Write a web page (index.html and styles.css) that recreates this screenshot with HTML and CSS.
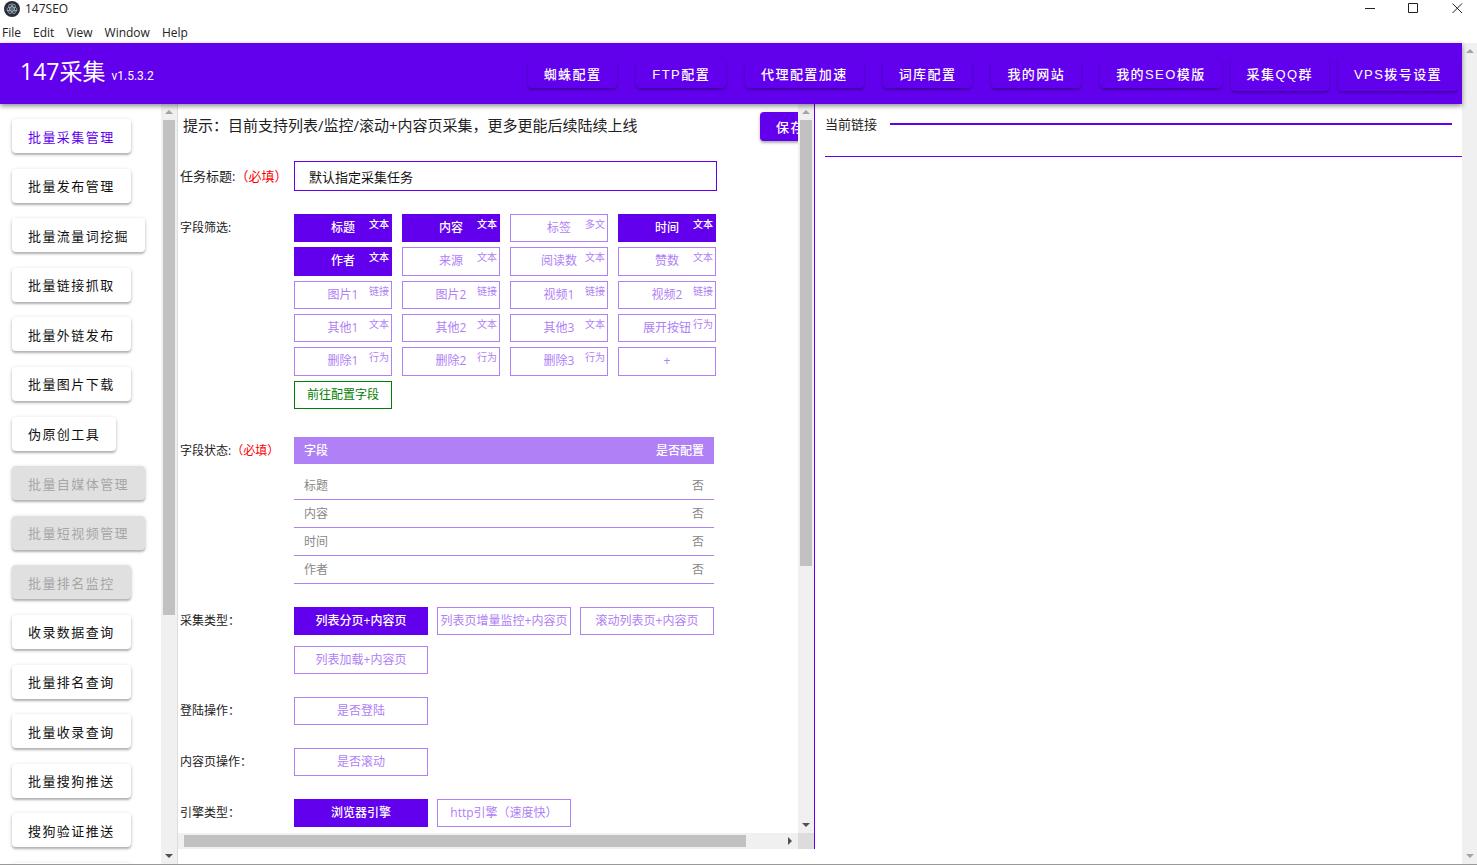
FILE: index.html
```html
<!DOCTYPE html>
<html lang="zh-CN">
<head>
<meta charset="utf-8">
<title>147SEO</title>
<link rel="stylesheet" href="styles.css">
</head>
<body>
<div class="window">
  <div class="titlebar">
    <svg class="app-icon" viewBox="0 0 16 16" aria-hidden="true">
      <circle cx="8" cy="8" r="8" fill="#2b2e3a"/>
      <g fill="none" stroke="#a9c3cc" stroke-width="0.7">
        <ellipse cx="8" cy="8" rx="5.2" ry="2"/>
        <ellipse cx="8" cy="8" rx="5.2" ry="2" transform="rotate(60 8 8)"/>
        <ellipse cx="8" cy="8" rx="5.2" ry="2" transform="rotate(120 8 8)"/>
      </g>
      <circle cx="8" cy="8" r="0.8" fill="#a9c3cc"/>
      <circle cx="3.4" cy="9.8" r="0.7" fill="#a9c3cc"/>
      <circle cx="12.6" cy="9.8" r="0.7" fill="#a9c3cc"/>
      <circle cx="8" cy="2.9" r="0.7" fill="#a9c3cc"/>
    </svg>
    <span class="app-name">147SEO</span>
    <div class="window-controls">
      <button type="button" aria-label="最小化"><svg viewBox="0 0 11 11"><path d="M0 5.5H10"/></svg></button>
      <button type="button" aria-label="最大化"><svg viewBox="0 0 11 11"><path d="M.5 .5H9.500V9.500H.5Z"/></svg></button>
      <button type="button" aria-label="关闭"><svg viewBox="0 0 11 11"><path d="M.5 .5L10 10M10 .5L.5 10"/></svg></button>
    </div>
  </div>
  <nav class="menubar" aria-label="菜单">
    <button type="button">File</button>
    <button type="button">Edit</button>
    <button type="button">View</button>
    <button type="button">Window</button>
    <button type="button">Help</button>
  </nav>

  <div class="viewport">
    <div class="page">
      <header class="appbar">
        <h1 class="brand">147采集 <small>v1.5.3.2</small></h1>
        <nav class="topnav">
          <button type="button" class="btn btn-top">蜘蛛配置</button>
          <button type="button" class="btn btn-top">FTP配置</button>
          <button type="button" class="btn btn-top">代理配置加速</button>
          <button type="button" class="btn btn-top">词库配置</button>
          <button type="button" class="btn btn-top">我的网站</button>
          <button type="button" class="btn btn-top">我的SEO模版</button>
          <div class="topnav-extra">
            <button type="button" class="btn btn-top btn-tall">采集QQ群</button>
            <button type="button" class="btn btn-top btn-tall">VPS拨号设置</button>
          </div>
        </nav>
      </header>

      <div class="body">
        <aside class="sidebar">
          <div class="sidebar-clip">
            <nav class="sidenav">
              <button type="button" class="btn btn-side current">批量采集管理</button>
              <button type="button" class="btn btn-side">批量发布管理</button>
              <button type="button" class="btn btn-side">批量流量词挖掘</button>
              <button type="button" class="btn btn-side">批量链接抓取</button>
              <button type="button" class="btn btn-side">批量外链发布</button>
              <button type="button" class="btn btn-side">批量图片下载</button>
              <button type="button" class="btn btn-side">伪原创工具</button>
              <button type="button" class="btn btn-side" disabled>批量自媒体管理</button>
              <button type="button" class="btn btn-side" disabled>批量短视频管理</button>
              <button type="button" class="btn btn-side" disabled>批量排名监控</button>
              <button type="button" class="btn btn-side">收录数据查询</button>
              <button type="button" class="btn btn-side">批量排名查询</button>
              <button type="button" class="btn btn-side">批量收录查询</button>
              <button type="button" class="btn btn-side">批量搜狗推送</button>
              <button type="button" class="btn btn-side">搜狗验证推送</button>
              <button type="button" class="btn btn-side btn-blank" aria-label="更多"></button>
            </nav>
          </div>
          <div class="scroll-v" aria-hidden="true">
            <svg class="arrow dim" viewBox="0 0 16 16"><path d="M4 10L8 6L12 10Z"/></svg>
            <div class="track"><div class="thumb thumb-side"></div></div>
            <svg class="arrow" viewBox="0 0 16 16"><path d="M4 6L8 10L12 6Z"/></svg>
          </div>
        </aside>

        <main class="editor">
          <div class="editor-view">
            <form class="form">
              <div class="form-head">
                <p class="hint">提示：目前支持列表/监控/滚动+内容页采集，更多更能后续陆续上线</p>
                <button type="button" class="btn btn-save">保存</button>
              </div>

              <div class="row row-title">
                <label class="label label-large" for="task">任务标题:<em>（必填）</em></label>
                <input id="task" class="task-input" type="text" value="默认指定采集任务">
              </div>

              <div class="row row-fields">
                <span class="label">字段筛选:</span>
                <div class="chips chips-fields">
                  <button type="button" class="chip on">标题<sup>文本</sup></button>
                  <button type="button" class="chip on">内容<sup>文本</sup></button>
                  <button type="button" class="chip">标签<sup>多文</sup></button>
                  <button type="button" class="chip on">时间<sup>文本</sup></button>
                  <button type="button" class="chip on">作者<sup>文本</sup></button>
                  <button type="button" class="chip">来源<sup>文本</sup></button>
                  <button type="button" class="chip">阅读数<sup>文本</sup></button>
                  <button type="button" class="chip">赞数<sup>文本</sup></button>
                  <button type="button" class="chip">图片1<sup>链接</sup></button>
                  <button type="button" class="chip">图片2<sup>链接</sup></button>
                  <button type="button" class="chip">视频1<sup>链接</sup></button>
                  <button type="button" class="chip">视频2<sup>链接</sup></button>
                  <button type="button" class="chip">其他1<sup>文本</sup></button>
                  <button type="button" class="chip">其他2<sup>文本</sup></button>
                  <button type="button" class="chip">其他3<sup>文本</sup></button>
                  <button type="button" class="chip">展开按钮<sup>行为</sup></button>
                  <button type="button" class="chip">删除1<sup>行为</sup></button>
                  <button type="button" class="chip">删除2<sup>行为</sup></button>
                  <button type="button" class="chip">删除3<sup>行为</sup></button>
                  <button type="button" class="chip">+</button>
                  <button type="button" class="chip go">前往配置字段</button>
                </div>
              </div>

              <div class="row">
                <span class="label">字段状态:<em>（必填）</em></span>
                <table class="status">
                  <thead><tr><th>字段</th><th>是否配置</th></tr></thead>
                  <tbody>
                    <tr><td>标题</td><td>否</td></tr>
                    <tr><td>内容</td><td>否</td></tr>
                    <tr><td>时间</td><td>否</td></tr>
                    <tr><td>作者</td><td>否</td></tr>
                  </tbody>
                </table>
              </div>

              <div class="row">
                <span class="label">采集类型：</span>
                <div class="chips chips-wide">
                  <button type="button" class="chip on">列表分页+内容页</button>
                  <button type="button" class="chip">列表页增量监控+内容页</button>
                  <button type="button" class="chip">滚动列表页+内容页</button>
                  <button type="button" class="chip">列表加载+内容页</button>
                </div>
              </div>

              <div class="row">
                <span class="label">登陆操作：</span>
                <div class="chips chips-wide"><button type="button" class="chip">是否登陆</button></div>
              </div>

              <div class="row">
                <span class="label">内容页操作：</span>
                <div class="chips chips-wide"><button type="button" class="chip">是否滚动</button></div>
              </div>

              <div class="row">
                <span class="label">引擎类型：</span>
                <div class="chips chips-wide">
                  <button type="button" class="chip on">浏览器引擎</button>
                  <button type="button" class="chip">http引擎（速度快）</button>
                </div>
              </div>
            </form>
          </div>
          <div class="scroll-v" aria-hidden="true">
            <svg class="arrow dim" viewBox="0 0 16 16"><path d="M4 10L8 6L12 10Z"/></svg>
            <div class="track"><div class="thumb thumb-editor"></div></div>
            <svg class="arrow" viewBox="0 0 16 16"><path d="M4 6L8 10L12 6Z"/></svg>
          </div>
          <div class="scroll-h" aria-hidden="true">
            <div class="track"><div class="thumb"></div></div>
            <svg class="arrow" viewBox="0 0 16 16"><path d="M6 4L10 8L6 12Z"/></svg>
          </div>
          <div class="scroll-corner"></div>
        </main>

        <section class="links">
          <div class="links-head">
            <h2>当前链接</h2>
            <div class="links-rule"></div>
          </div>
        </section>
      </div>
    </div>
    <div class="scroll-v" aria-hidden="true">
      <svg class="arrow dim" viewBox="0 0 16 16"><path d="M4 10L8 6L12 10Z"/></svg>
      <div class="track"></div>
      <svg class="arrow dim" viewBox="0 0 16 16"><path d="M4 6L8 10L12 6Z"/></svg>
    </div>
  </div>
</div>
</body>
</html>
```
FILE: styles.css
```css
:root {
  --primary: #6200ee;
  --primary-soft: #b080f6;
  --track: #f0f0f0;
  --thumb: #c1c1c1;
}

* { box-sizing: border-box; }

body {
  margin: 0;
  background: #fff;
  color: #222;
  font-family: "Open Sans", "Noto Sans CJK SC", sans-serif;
  font-size: 12px;
}

button {
  margin: 0;
  padding: 0;
  border: 0;
  background: none;
  color: inherit;
  font: inherit;
}

.window {
  display: flex;
  flex-direction: column;
  height: 100vh;
  overflow: hidden;
  border-bottom: 1px solid #999;
}

/* Window chrome */
.titlebar {
  display: flex;
  align-items: center;
  gap: 5px;
  flex: none;
  height: 24px;
  padding: 0 14px 7px 4px;
}

.app-icon { width: 16px; height: 16px; }

.app-name { line-height: 16px; }

.window-controls {
  display: flex;
  gap: 33px;
  margin-left: auto;
}

.window-controls button { display: flex; width: 11px; }
.window-controls button:first-child { margin-right: -1px; }

.window-controls svg {
  width: 11px;
  height: 11px;
  fill: none;
  stroke: #222;
}

.menubar {
  display: flex;
  align-items: flex-start;
  gap: 12px;
  flex: none;
  height: 19px;
  padding-left: 2px;
  line-height: 18px;
}

/* Page */
.viewport {
  display: flex;
  flex: 1;
  min-height: 0;
}

.page {
  display: flex;
  flex-direction: column;
  flex: 1;
  min-width: 0;
}

.appbar {
  display: flex;
  align-items: center;
  justify-content: space-between;
  flex: none;
  height: 61px;
  padding: 0 4px 0 20px;
  background: var(--primary);
  color: #fff;
  box-shadow: 0 2px 5px rgba(0, 0, 0, .45);
  z-index: 1;
}

.brand {
  margin: 0;
  font-size: 23px;
  font-weight: 400;
  line-height: 30px;
}

.brand small {
  font-family: Roboto, sans-serif;
  font-size: 12px;
  font-weight: 400;
}

.topnav,
.topnav-extra {
  display: flex;
  align-items: center;
}

.topnav { gap: 19px; }

.topnav-extra {
  gap: 9px;
  margin-left: -10px;
}

.btn {
  flex: none;
  padding: 0 16px;
  border-radius: 4px;
  font-family: "Liberation Sans", "Noto Sans CJK SC", sans-serif;
  font-size: 13px;
  font-weight: 500;
  letter-spacing: .11em;
  white-space: nowrap;
  box-shadow: 0 2px 2px rgba(0, 0, 0, .22), 0 1px 4px rgba(0, 0, 0, .16);
}

.btn-top { height: 28px; }
.btn-tall { height: 34px; }

.body {
  display: flex;
  flex: 1;
  min-height: 0;
}

/* Sidebar */
.sidebar {
  display: flex;
  flex: none;
  width: 178px;
  border-right: 1px solid #ddd;
}

.sidebar-clip {
  flex: 1;
  overflow: hidden;
}

.sidenav {
  display: flex;
  flex-direction: column;
  align-items: flex-start;
  justify-content: space-between;
  height: calc(100% + 33px);
  padding: 15px 0 0 12px;
}

.btn-side {
  height: 34px;
  background: #fff;
  color: #111;
  font-weight: 400;
}

.btn-side.current { color: var(--primary); }

.btn-side:disabled {
  background: #e0e0e0;
  color: #a6a6a6;
}

.btn-blank { width: 119px; }

/* Scroll bars */
.scroll-v,
.scroll-h {
  display: flex;
  flex: none;
  background: var(--track);
}

.scroll-v {
  flex-direction: column;
  width: 16px;
}

.viewport > .scroll-v { width: 15px; }

.scroll-h { height: 16px; }

.arrow {
  flex: none;
  width: 16px;
  height: 16px;
  fill: #505050;
}

.arrow.dim { fill: #a3a3a3; }

.track { flex: 1; }

.scroll-v .thumb {
  width: 12px;
  margin: 0 auto;
  background: var(--thumb);
}

.thumb-side { height: 68%; }
.thumb-editor { height: 64%; }

.scroll-h .track { padding: 2px 0 2px 6px; }

.scroll-h .thumb {
  width: 94%;
  height: 12px;
  background: var(--thumb);
}

.scroll-corner { background: #dcdcdc; }

/* Editor */
.editor {
  display: grid;
  grid-template: minmax(0, 1fr) 16px / minmax(0, 1fr) 16px;
  flex: 0 0 637px;
  margin-bottom: 15px;
  border-right: 1px solid var(--primary);
}

.editor-view { overflow: hidden; }

.form {
  display: flex;
  flex-direction: column;
  gap: 23px;
  padding: 8px 0 0 2px;
}

.form-head { display: flex; }

.hint {
  flex: 0 0 580px;
  margin: 0;
  padding-left: 3px;
  font-size: 15px;
  line-height: 26px;
}

.btn-save {
  height: 29px;
  background: var(--primary);
  color: #fff;
}

.row {
  display: grid;
  grid-template-columns: 114px 420px;
  align-items: start;
}

.row-title { grid-template-columns: 114px 423px; }
.row-fields { grid-template-columns: 114px 422px; }

.row-title { margin-top: -3px; }
.row-fields { padding-bottom: 5px; }

.label {
  line-height: 28px;
  white-space: nowrap;
}

.label em {
  color: #f00;
  font-style: normal;
}

.label-large {
  font-size: 13px;
  line-height: 30px;
}

.task-input {
  width: 100%;
  height: 30px;
  padding: 0 14px;
  border: 1px solid var(--primary);
  border-radius: 0;
  outline: 0;
  background: #fff;
  color: #111;
  font: inherit;
  font-size: 13px;
}

.chips { display: grid; }

.chips-fields {
  grid-template: repeat(6, 1fr) / repeat(4, 1fr);
  gap: 5px 10px;
  height: 195px;
}

.chips-wide {
  grid-template-columns: repeat(3, 1fr);
  grid-auto-rows: 28px;
  gap: 11px 9px;
}

.chip {
  position: relative;
  border: 1px solid var(--primary-soft);
  color: var(--primary-soft);
  font-size: 12px;
  line-height: 24px;
  white-space: nowrap;
}

.chip sup {
  position: absolute;
  top: 2px;
  right: 2px;
  font-size: 10px;
  line-height: 14px;
}

.chip.on {
  border-color: var(--primary);
  background: var(--primary);
  color: #fff;
  font-weight: 500;
}

.chip.go {
  border-color: #008000;
  color: #008000;
}

.status {
  width: 100%;
  border-collapse: separate;
  border-spacing: 0;
}

.status th,
.status td {
  height: 28px;
  padding: 0 10px;
  border-bottom: 1px solid var(--primary-soft);
  color: #888;
  text-align: left;
  line-height: 16px;
}

.status th {
  height: 27px;
  border: 0;
  background: var(--primary-soft);
  color: #fff;
  font-weight: 500;
}

.status th:last-child,
.status td:last-child { text-align: right; }

.status tbody::before {
  display: block;
  height: 8px;
  content: "";
}

/* Links */
.links {
  flex: 1;
  min-width: 0;
  padding-left: 10px;
}

.links-head {
  display: flex;
  align-items: center;
  gap: 13px;
  height: 53px;
  padding: 0 10px 12px 0;
  border-bottom: 1px solid var(--primary);
}

.links-head h2 {
  margin: 0;
  font-size: 13px;
  font-weight: 400;
  line-height: 18px;
}

.links-rule {
  flex: 1;
  height: 2px;
  background: var(--primary);
}
```
